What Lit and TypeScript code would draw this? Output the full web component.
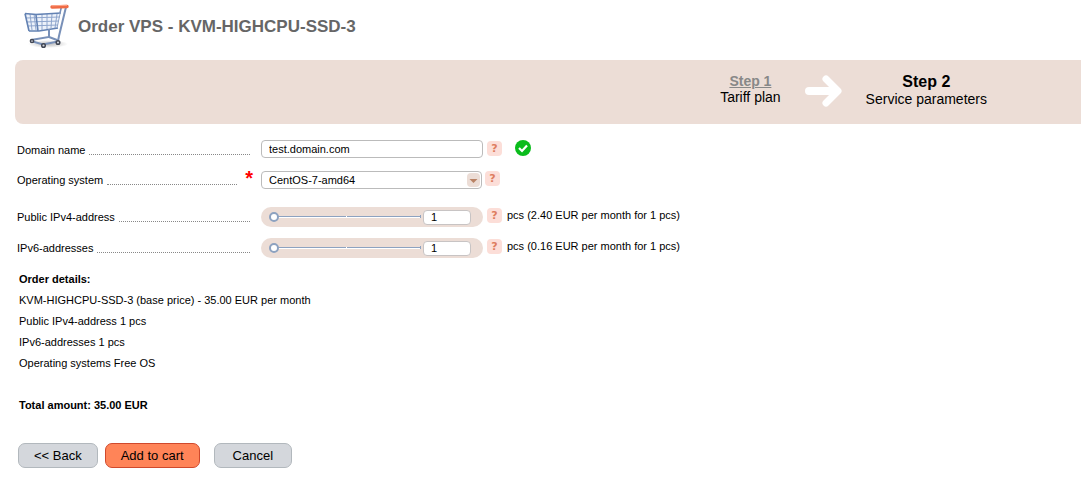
import { LitElement, html, css, nothing } from "lit";
import { customElement, property, state } from "lit/decorators.js";

const base = css`
  *, *::before, *::after { box-sizing: border-box; }
  input, select, button { font: inherit; color: inherit; margin: 0; }
  .help {
    width: 15px; height: 15px; padding: 0; flex: none;
    border: 0; border-radius: 4px; background: #fcded8; color: #de7d60;
    font: bold 11px/14px "DejaVu Sans", sans-serif; text-align: center;
  }
`;

@customElement("field-label")
class FieldLabel extends LitElement {
  @property() text = "";
  @property({ type: Boolean }) required = false;
  static styles = css`
    :host { display: flex; width: 233px; flex: none; margin-right: 11px; line-height: 14px; padding-top: 3px; }
    :host([required]) { width: 236px; margin-right: 8px; padding-top: 2px; }
    .dots { flex: 1; margin-left: 4px; height: 11px; border-bottom: 1px dotted #888; }
    .star { padding-left: 8px; color: #f00; font-size: 20px; font-weight: bold; line-height: 10px; height: 10px; }
  `;
  render() {
    return html`<span>${this.text}</span><span class="dots"></span>
      ${this.required ? html`<span class="star">*</span>` : nothing}`;
  }
}

@customElement("amount-slider")
class AmountSlider extends LitElement {
  @property() name = "";
  @property() price = "";
  @state() private amount = 1;
  static styles = [base, css`
    :host { display: flex; align-items: flex-start; }
    .pill {
      display: flex; align-items: center; gap: 2px; width: 222px; height: 20px;
      padding: 0 12px 0 8px; border-radius: 10px; background: #ecddd6;
    }
    .range {
      appearance: none; flex: 1; min-width: 0; height: 20px; background:
        linear-gradient(#fff, #fff) 77px 9px / 1px 2px no-repeat,
        linear-gradient(#8da2c0, #8da2c0) 100% 8px / 1px 3px no-repeat,
        linear-gradient(#8da2c0, #8da2c0) 6px 9px / 100% 1px no-repeat,
        linear-gradient(#fff, #fff) 6px 10px / 100% 1px no-repeat;
    }
    .range::-webkit-slider-thumb {
      appearance: none; width: 10px; height: 10px; border-radius: 5px;
      border: 2px solid #8da2c0; background: #fff; margin-top: -1px;
    }
    .count {
      width: 48px; height: 15px; border: 1px solid #c8c4c4; border-radius: 4px;
      background: #fff; padding: 0 7px; line-height: 13px; outline: 0;
    }
    .help { margin: 1px 5px 0 4px; }
    .price { line-height: 14px; padding-top: 1px; }
  `];
  private change(e: Event) {
    this.amount = Number((e.target as HTMLInputElement).value) || 1;
  }
  render() {
    return html`<div class="pill">
        <input class="range" type="range" min="1" max="3" aria-label=${this.name} .value=${String(this.amount)} @input=${this.change}>
        <input class="count" type="text" aria-label="${this.name} amount" .value=${String(this.amount)} @change=${this.change}>
      </div>
      <button class="help" type="button">?</button>
      <span class="price">pcs (${this.price} EUR per month for 1 pcs)</span>`;
  }
}

@customElement("app-root")
class AppRoot extends LitElement {
  static styles = [base, css`
    :host { display: block; font: 11px/14px "Liberation Sans", Arial, sans-serif; color: #000; background: #fff; }
    .header { display: flex; height: 60px; padding-left: 22px; gap: 8px; }
    .cart { width: 48px; height: 50px; flex: none; }
    .title { margin: 17px 0 0; font-size: 17px; line-height: 20px; color: #666; }
    .steps {
      display: flex; justify-content: flex-end; margin-left: 15px; padding: 13px 94px 0 0;
      height: 64px; background: #ecddd6; border-radius: 8px 0 0 8px;
      font-size: 14px; line-height: 16px; text-align: center;
    }
    .link { display: block; color: #888; font-weight: bold; }
    .current { display: block; font-size: 16px; line-height: 18px; }
    .arrow { width: 38px; height: 34px; margin: 1px 23px 0 24px; }
    .form { padding: 16px 17px 0; }
    .row { display: flex; align-items: flex-start; }
    .field { margin-bottom: 13px; }
    .os { margin-bottom: 18px; }
    .amount { margin-bottom: 11px; }
    .text, .select {
      height: 18px; border: 1px solid #bbb; border-radius: 4px; background: #fff;
      padding: 0 7px; line-height: 14px; outline: 0;
    }
    .text { width: 222px; }
    .picker { display: grid; align-items: center; }
    .picker > * { grid-area: 1 / 1; }
    .select { appearance: none; width: 221px; }
    .drop { justify-self: end; width: 13px; height: 14px; margin-right: 2px; pointer-events: none; }
    .field .help { margin: 1px 0 0 4px; }
    .os .help { margin: 0 0 0 3px; }
    .ok { width: 16px; height: 16px; margin-left: 13px; }
    .details { padding: 0 19px; line-height: 21px; }
    .line { margin: 0; font-size: 11px; font-weight: normal; }
    .strong { font-weight: bold; }
    .total { margin-top: 21px; }
    .actions { display: flex; padding: 27px 18px 0; gap: 7px; }
    .button {
      height: 25px; padding: 0 15px; border: 1px solid #b2b8bd; border-radius: 7px;
      background: #d4d7dc; font-size: 13px; line-height: 23px;
    }
    .primary { background: #ff8458; border-color: #d0492c; }
    .cancel { margin-left: 7px; padding: 0 18px; }
  `];

  render() {
    return html`
      <header class="header">
        <svg class="cart" viewBox="0 0 48 50" fill="none" aria-hidden="true">
          <defs><radialGradient id="shade"><stop stop-color="#777" stop-opacity=".5"/><stop offset="1" stop-color="#777" stop-opacity="0"/></radialGradient></defs>
          <ellipse cx="26" cy="44" rx="20" ry="4" fill="url(#shade)"/>
          <path d="M3 13.500 38 13 36 28 7 31Z" fill="#edf2fa"/>
          <path d="M4 18 38 17M5 22 37 21M6 26 36 25M8 14l2 16M12 14l2 16M20 14v16M25 14v15M30 14l-1 14M35 14l-2 14" stroke="#8fa6cd"/>
          <path d="M3 13.500 14 14.500 39 13M7 31 17 31 36 28M3 13.500 7 31M14 15l2 16" stroke="#6382b3" stroke-width="1.6"/>
          <path d="M44 7 37 36 36 41M27 29 27 37 9 40M9 41l12 3.500 15-3M27 37l8 3" stroke="#7890b8" stroke-width="2"/>
          <path d="M39 7 38 14 35 28" stroke="#8ea4c9"/>
          <path d="M39.500 6.500 38 13" stroke="#7890b8" stroke-width="1.500"/>
          <path d="M39.500 7.500 44 7.500" stroke="#8ea4c9"/>
          <path d="M30 6.500 45 6" stroke="#ef6b45" stroke-width="3.4" stroke-linecap="round" transform="translate(0 .5)"/>
          <path d="M30 5.800 45 5.300" stroke="#ffa78b"/>
          <g fill="#d5d8df" stroke="#424753" stroke-width="1.5"><circle cx="10" cy="41" r="1.600"/><circle cx="21.500" cy="45.500" r="1.800"/><circle cx="36" cy="42.500" r="1.800"/></g>
        </svg>
        <h1 class="title">Order VPS - KVM-HIGHCPU-SSD-3</h1>
      </header>
      <nav class="steps">
        <div><a class="link" href="#tariff">Step 1</a>Tariff plan</div>
        <svg class="arrow" viewBox="0 0 38 34" fill="none" stroke="#fff" aria-hidden="true">
          <path d="M4 17H31" stroke-width="8" stroke-linecap="round"/>
          <path d="M21 5 33 17 21 29" stroke-width="7" stroke-linecap="round" stroke-linejoin="round"/>
        </svg>
        <div><strong class="current">Step 2</strong>Service parameters</div>
      </nav>
      <main>
        <form class="form" @submit=${(e: Event) => e.preventDefault()}>
          <div class="row field">
            <label class="row" for="domain"><field-label text="Domain name"></field-label></label>
            <input class="text" id="domain" type="text" value="test.domain.com">
            <button class="help" type="button">?</button>
            <svg class="ok" viewBox="0 0 16 16" aria-hidden="true"><circle cx="8" cy="8" r="8" fill="#0abc1c"/><path d="M4 8 7 11 12 5.500" fill="none" stroke="#fff" stroke-width="2.200"/></svg>
          </div>
          <div class="row os">
            <label class="row" for="os"><field-label text="Operating system" required></field-label></label>
            <div class="picker">
              <select class="select" id="os"><option>CentOS-7-amd64</option></select>
              <svg class="drop" viewBox="0 0 13 14" aria-hidden="true"><rect width="13" height="14" rx="4" fill="#ecddd6"/><path d="M2.500 6H10.500L6.500 10Z" fill="#b98264"/></svg>
            </div>
            <button class="help" type="button">?</button>
          </div>
          <div class="row amount">
            <field-label text="Public IPv4-address"></field-label>
            <amount-slider name="Public IPv4-address" price="2.40"></amount-slider>
          </div>
          <div class="row amount">
            <field-label text="IPv6-addresses"></field-label>
            <amount-slider name="IPv6-addresses" price="0.16"></amount-slider>
          </div>
        </form>
        <section class="details">
          <h2 class="line strong">Order details:</h2>
          <p class="line">KVM-HIGHCPU-SSD-3 (base price) - 35.00 EUR per month</p>
          <p class="line">Public IPv4-address 1 pcs</p>
          <p class="line">IPv6-addresses 1 pcs</p>
          <p class="line">Operating systems Free OS</p>
          <p class="line strong total">Total amount: 35.00 EUR</p>
        </section>
        <div class="actions">
          <button class="button" type="button">&lt;&lt; Back</button>
          <button class="button primary" type="button">Add to cart</button>
          <button class="button cancel" type="button">Cancel</button>
        </div>
      </main>`;
  }
}
